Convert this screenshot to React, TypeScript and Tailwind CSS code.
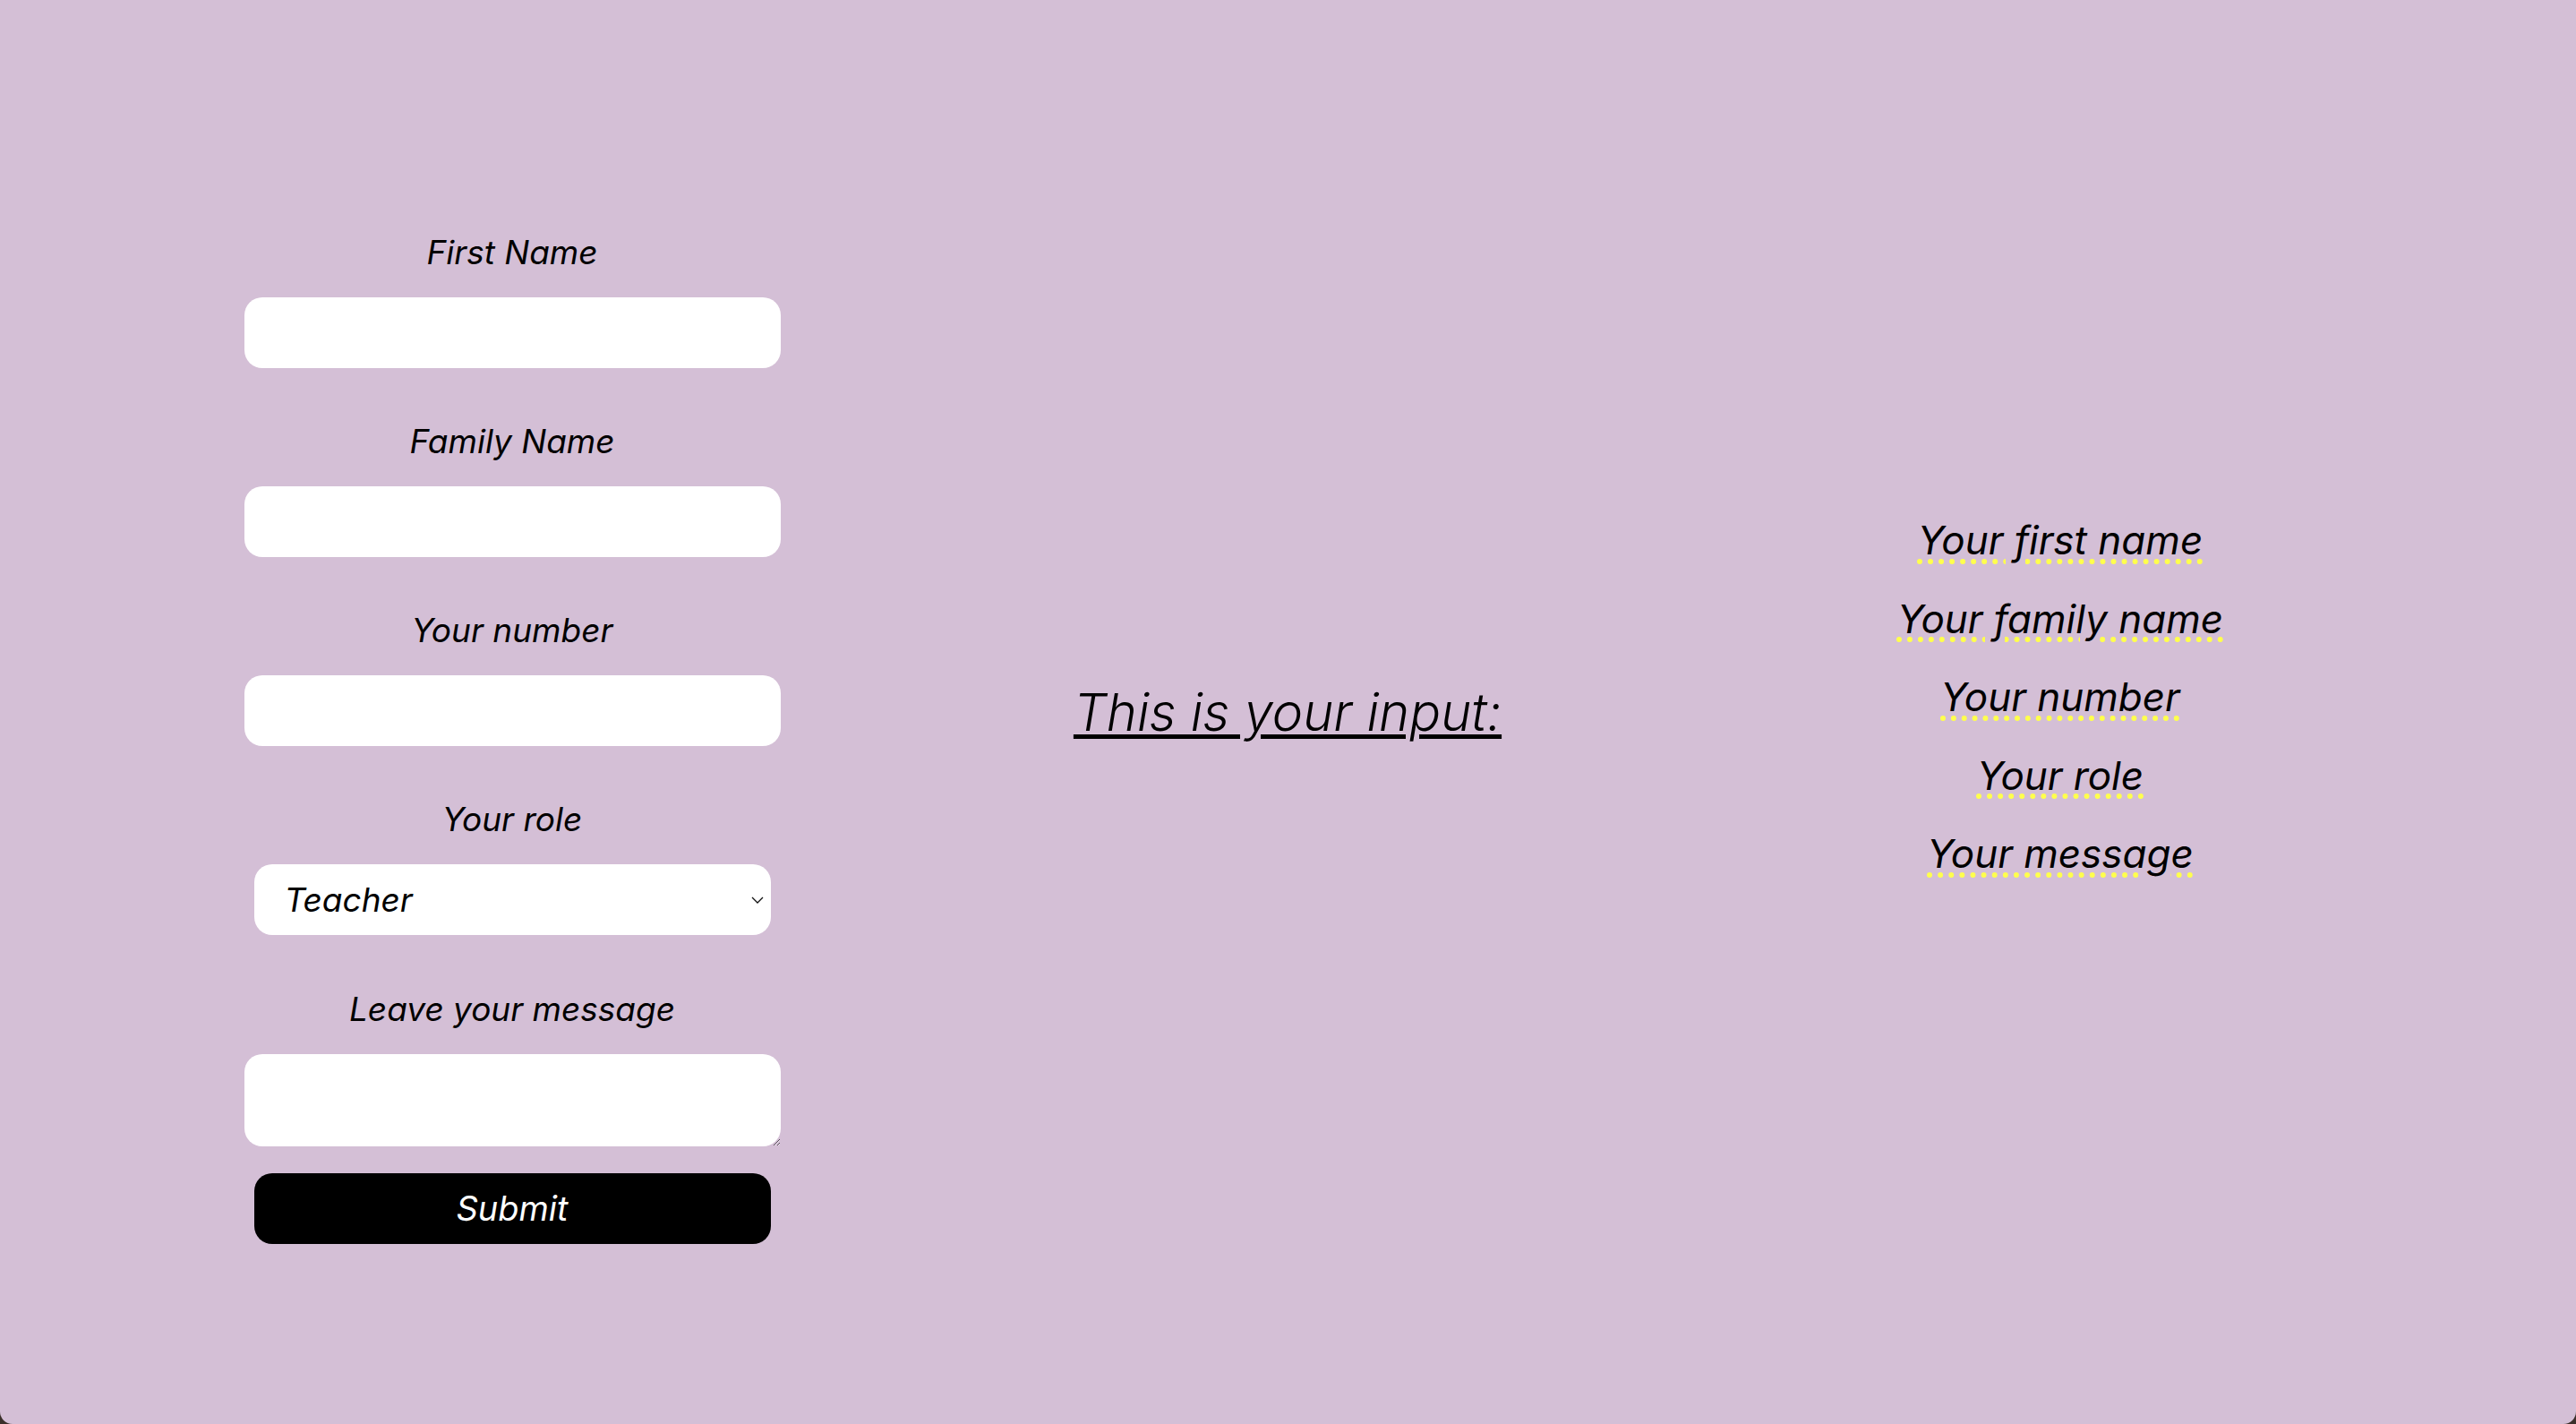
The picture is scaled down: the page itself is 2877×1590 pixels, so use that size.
import React from "react";

const sans = "font-['Inter','Noto_Sans',sans-serif]";

function Label({ children }: { children: React.ReactNode }) {
  return (
    <label
      className={`block text-center text-[37px] leading-[42px] italic text-black ${sans}`}
    >
      {children}
    </label>
  );
}

export default function App() {
  const outputs = [
    "Your first name",
    "Your family name",
    "Your number",
    "Your role",
    "Your message",
  ];
  const inputCls =
    "mt-[29px] h-[79px] w-[599px] rounded-[20px] bg-white px-6 outline-none";
  return (
    <div className="min-h-screen w-full bg-[#3b302b]">
      <div className="grid h-[1590px] w-full grid-cols-[1144px_588px_1138px_1fr] rounded-b-[14px] bg-[#d4bfd6]">
        {/* Form column */}
        <div className="flex justify-center pt-[261px]">
          <form
            className="flex w-[599px] flex-col items-center"
            onSubmit={(e) => e.preventDefault()}
          >
            <Label>First Name</Label>
            <input type="text" className={inputCls} />
            <div className="mt-[61px]">
              <Label>Family Name</Label>
            </div>
            <input type="text" className={inputCls} />
            <div className="mt-[61px]">
              <Label>Your number</Label>
            </div>
            <input type="text" className={inputCls} />
            <div className="mt-[61px]">
              <Label>Your role</Label>
            </div>
            <div className="relative mt-[29px] h-[79px] w-[577px]">
              <select
                defaultValue="Teacher"
                className={`h-full w-full appearance-none rounded-[20px] bg-white pl-[34px] pr-10 text-[37px] italic text-black outline-none ${sans}`}
              >
                <option>Teacher</option>
                <option>Student</option>
                <option>Parent</option>
              </select>
              <svg
                className="pointer-events-none absolute right-[8px] top-[36px]"
                width="14"
                height="8"
                viewBox="0 0 14 8"
                fill="none"
              >
                <path d="M1 1l6 6 6-6" stroke="#111" strokeWidth="1.3" />
              </svg>
            </div>
            <div className="mt-[62px]">
              <Label>Leave your message</Label>
            </div>
            <textarea className="mt-[29px] h-[103px] w-[599px] rounded-[20px] bg-white px-6 py-3 outline-none" />
            <button
              type="submit"
              className={`mt-[30px] h-[79px] w-[577px] rounded-[20px] bg-black text-[38px] italic text-white ${sans}`}
            >
              Submit
            </button>
          </form>
        </div>

        {/* Middle column */}
        <div className="flex items-center justify-center">
          <h2
            className={`${sans} whitespace-nowrap text-[58px] font-light italic leading-[72px] text-black underline decoration-[5px] underline-offset-[4px]`}
          >
            This is your input:
          </h2>
        </div>

        {/* Output column */}
        <div className="flex flex-col items-center justify-center pb-[32px]">
          {outputs.map((t) => (
            <p
              key={t}
              className={`${sans} text-[44px] italic leading-[87.5px] text-black underline decoration-[#ffff4d] decoration-dotted decoration-[6px] underline-offset-[5px]`}
            >
              {t}
            </p>
          ))}
        </div>
      </div>
    </div>
  );
}
